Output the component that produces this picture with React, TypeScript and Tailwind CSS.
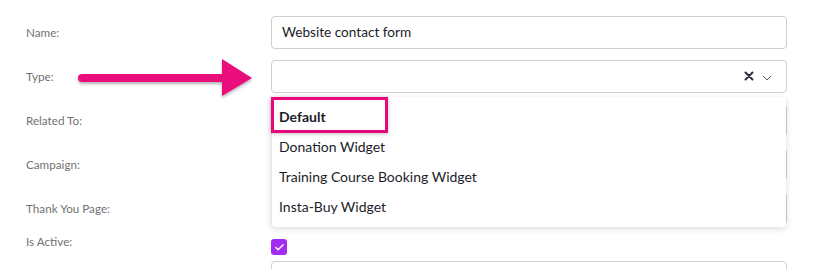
import { Check } from 'lucide-react';

const options = ['Default', 'Donation Widget', 'Training Course Booking Widget', 'Insta-Buy Widget'];

function Label({ children }: { children: React.ReactNode }) {
  return <div className="w-[245px] shrink-0 text-[11.7px] text-[#727272]">{children}</div>;
}

function Input({ value }: { value?: string }) {
  return (
    <div className="h-[33px] w-[516px] rounded-[4px] border border-[#cfcfcf] bg-white px-[10px] flex items-center text-[13.6px] text-[#1c1c28]">
      {value}
    </div>
  );
}

export default function App() {
  return (
    <div className="relative h-[269px] w-[820px] overflow-hidden bg-white pt-[16px] pl-[26px] font-['Lato',sans-serif]">
      <div className="flex items-center h-[33px] mb-[11px]">
        <Label>Name:</Label>
        <Input value="Website contact form" />
      </div>

      <div className="flex items-center h-[33px] mb-[11px]">
        <Label>Type:</Label>
        <div className="relative">
          <div className="h-[33px] w-[516px] rounded-[4px] border border-[#cfcfcf] bg-white flex items-center justify-end pr-[14px] gap-[8px]">
            <svg width="10" height="10" viewBox="0 0 10 10" className="mt-[-1px]">
              <path d="M1.5 1.5 L8.5 8.5 M8.5 1.5 L1.5 8.5" stroke="#2b2f3a" strokeWidth="2" strokeLinecap="round" />
            </svg>
            <svg width="10" height="6" viewBox="0 0 10 6" className="mt-[3px]">
              <path d="M1 1 L5 5 L9 1" stroke="#555" strokeWidth="1" fill="none" />
            </svg>
          </div>

          {/* open menu */}
          <div className="absolute left-0 right-[1px] top-[37px] z-10 rounded-[4px] border-l border-[#e4e4e4] bg-white pt-[4px] pb-[6px] shadow-[0_2px_6px_rgba(0,0,0,0.14)]">
            {options.map((o, i) => (
              <div
                key={o}
                className={
                  'h-[30px] flex items-center px-[7px] text-[14px] text-[#1c1c28] ' +
                  (i === 0 ? 'font-bold' : '')
                }
              >
                {o}
              </div>
            ))}
            <div className="absolute left-[-1px] top-0 h-[36px] w-[117px] border-[3px] border-[#e8087c] shadow-[0_1px_4px_rgba(0,0,0,0.25)]" />
          </div>
        </div>
      </div>

      <div className="flex items-center h-[33px] mb-[11px]">
        <Label>Related To:</Label>
        <Input />
      </div>
      <div className="flex items-center h-[33px] mb-[11px]">
        <Label>Campaign:</Label>
        <Input />
      </div>
      <div className="flex items-center h-[33px] mb-[9px]">
        <Label>Thank You Page:</Label>
        <Input />
      </div>

      <div className="flex items-start h-[27px]">
        <div className="w-[245px] shrink-0 text-[11.7px] text-[#727272] mt-[-1px]">Is Active:</div>
        <div className="mt-[5px] w-[16px] h-[16px] rounded-[3px] bg-[#a42cf0] flex items-center justify-center">
          <Check size={11} strokeWidth={3} color="white" />
        </div>
      </div>

      <div className="flex items-center h-[33px]">
        <div className="w-[245px] shrink-0" />
        <Input />
      </div>

      {/* pointer arrow */}
      <svg className="absolute left-[74px] top-[56px]" width="186" height="46" viewBox="0 0 186 46">
        <defs>
          <filter id="sh" x="-10%" y="-30%" width="120%" height="160%">
            <feDropShadow dx="0" dy="2" stdDeviation="1.5" floodColor="#000" floodOpacity="0.3" />
          </filter>
        </defs>
        <g filter="url(#sh)">
          <path d="M8 22 L152 22" stroke="#ea0a7c" strokeWidth="8" strokeLinecap="round" />
          <path d="M148 3 L178 22 L148 40 Z" fill="#ea0a7c" />
        </g>
      </svg>
    </div>
  );
}
